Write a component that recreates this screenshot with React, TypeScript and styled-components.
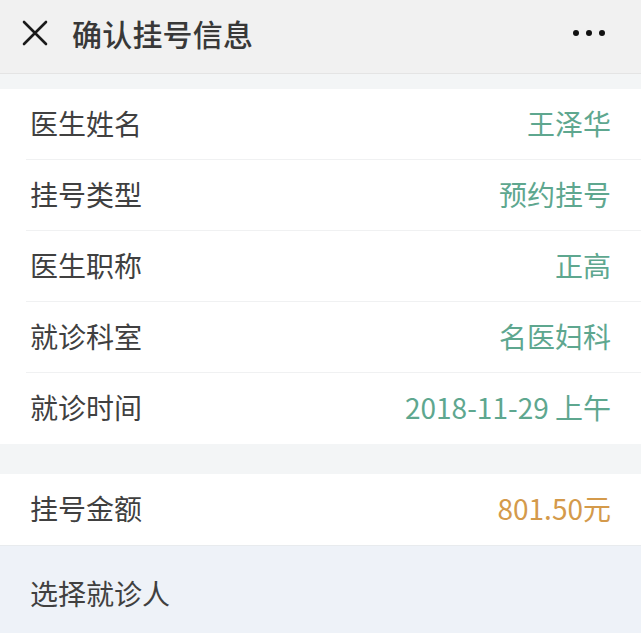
import styled, { createGlobalStyle } from 'styled-components';

type InfoRowProps = {
  label : string,
  value : string,
  tone? : 'green' | 'orange',
  last? : boolean,
}

const GlobalStyle = createGlobalStyle`
  html, body {
    margin:0;
    padding:0;
    background:#f3f5f6;
  }
  body {
    font-family: "Noto Sans CJK SC", "Noto Sans", sans-serif;
  }
`

const Page = styled.div`
  width:641px;
  height:633px;
  overflow:hidden;
  display:flex;
  flex-direction:column;
  background:#f3f5f6;
`

const Header = styled.header`
  display:flex;
  align-items:center;
  height:74px;
  box-sizing:border-box;
  padding:0 24px 8px 22px;
  background:#f1f1f1;
  border-bottom:1px solid #e4e4e4;
`

const Title = styled.h1`
  margin:0 0 0 24px;
  font-size:30px;
  font-weight:500;
  color:#383838;
  letter-spacing:0.2px;
`

const MoreButton = styled.div`
  margin-left:auto;
  display:flex;
  gap:7px;
  padding-right:12px;
  >span{
    width:6px;
    height:6px;
    border-radius:50%;
    background:#111;
  }
`

const Group = styled.section<{ $top : number }>`
  margin-top:${p => p.$top}px;
  background:#ffffff;
`

const Row = styled.div<{ $last? : boolean }>`
  display:flex;
  align-items:center;
  height:71px;
  box-sizing:border-box;
  padding:0 30px 3px;
  position:relative;
  &::after{
    content:'';
    display:${p => p.$last ? 'none' : 'block'};
    position:absolute;
    left:26px;
    right:0;
    bottom:0;
    height:1px;
    background:#f0f1f2;
  }
`

const Label = styled.span`
  font-size:28px;
  color:#404040;
`

const Value = styled.span<{ $tone : 'green' | 'orange' }>`
  margin-left:auto;
  font-size:28px;
  color:${p => p.$tone === 'orange' ? '#d49a4b' : '#5ea78f'};
`

const PatientRow = styled.div`
  flex:1;
  display:flex;
  align-items:flex-start;
  padding:27px 30px 0;
  background:#eef2f8;
  border-top:1px solid #e8ebee;
`

const CloseIcon = () => (
  <svg width="26" height="26" viewBox="0 0 26 26">
    <path d="M2 2L24 24M24 2L2 24" stroke="#1a1a1a" strokeWidth="2.6" strokeLinecap="round" />
  </svg>
)

const InfoRow = ({ label, value, tone = 'green', last } : InfoRowProps) => (
  <Row $last={last}>
    <Label>{label}</Label>
    <Value $tone={tone}>{value}</Value>
  </Row>
)

const rows = [
  { label : '医生姓名', value : '王泽华' },
  { label : '挂号类型', value : '预约挂号' },
  { label : '医生职称', value : '正高' },
  { label : '就诊科室', value : '名医妇科' },
  { label : '就诊时间', value : '2018-11-29 上午' },
]

export default function App() {
  return (
    <Page>
      <GlobalStyle />
      <Header>
        <CloseIcon />
        <Title>确认挂号信息</Title>
        <MoreButton>
          <span /><span /><span />
        </MoreButton>
      </Header>
      <Group $top={15}>
        {rows.map((r, i) => (
          <InfoRow key={r.label} label={r.label} value={r.value} last={i === rows.length - 1} />
        ))}
      </Group>
      <Group $top={30}>
        <InfoRow label="挂号金额" value="801.50元" tone="orange" last />
      </Group>
      <PatientRow>
        <Label>选择就诊人</Label>
      </PatientRow>
    </Page>
  )
}
